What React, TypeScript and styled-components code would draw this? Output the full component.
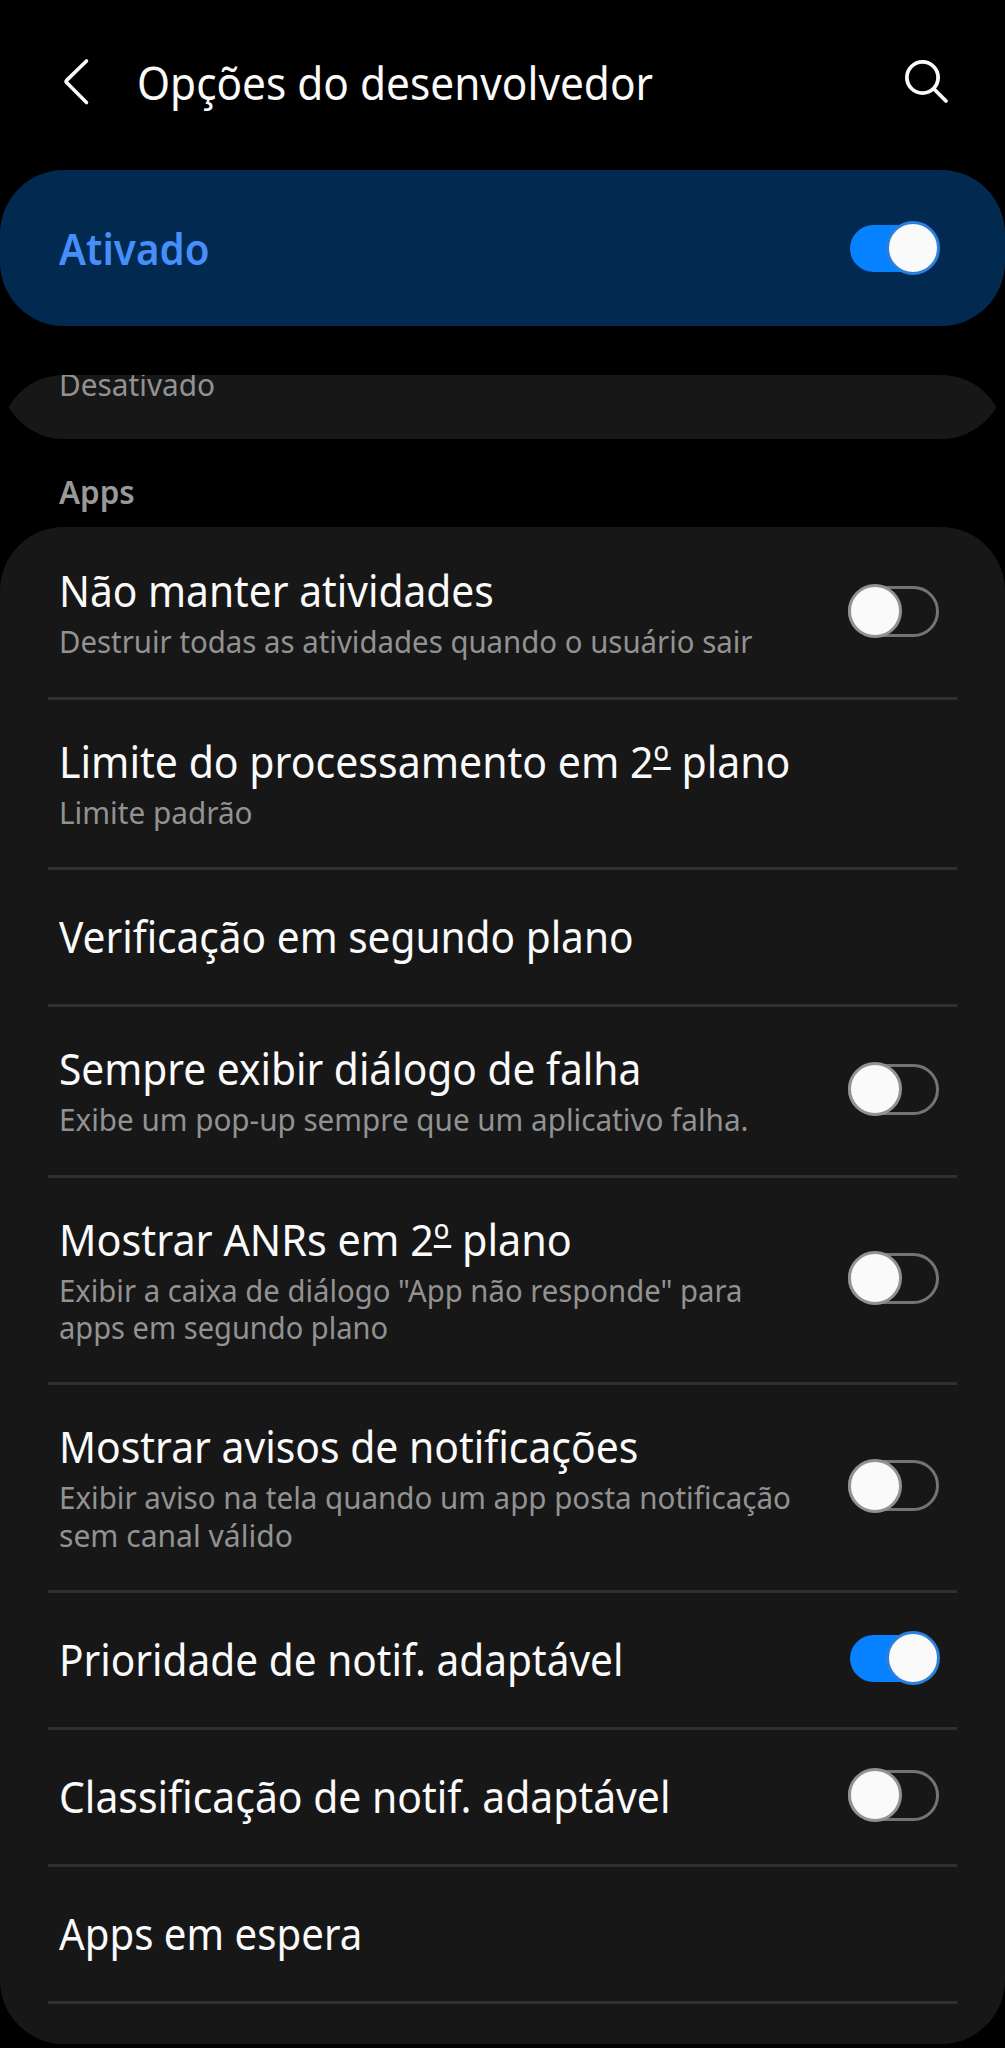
import React from "react";
import styled, { createGlobalStyle } from "styled-components";

const GlobalStyle = createGlobalStyle`
  * { box-sizing: border-box; }
  body { margin: 0; background: #000; }
`;

const Screen = styled.main`
  width: 1005px;
  height: 2048px;
  overflow: hidden;
  display: flex;
  flex-direction: column;
  background: #000;
  color: #fafafa;
  font-family: "Noto Sans", "Open Sans", sans-serif;
`;

const TopBar = styled.header`
  height: 170px;
  flex: none;
  display: flex;
  align-items: center;
  padding: 0 54px 6px 60px;
`;

const IconButton = styled.button`
  padding: 0;
  border: 0;
  background: none;
  color: #fafafa;
  display: flex;
  flex: none;
`;

const Narrow = styled.span<{ $stretch: number }>`
  display: block;
  width: max-content;
  white-space: nowrap;
  transform: scaleX(${(p) => p.$stretch});
  transform-origin: left center;
`;

const Ordinal = styled.span`
  letter-spacing: 2px;
  text-decoration: underline;
  text-decoration-thickness: 3px;
  text-underline-offset: -11px;
  text-decoration-skip-ink: none;
`;

const PageTitle = styled.h1`
  flex: 1;
  margin: 0 0 0 41px;
  font-size: 46px;
  font-weight: 400;
  line-height: 54px;
`;

const MasterCard = styled.section`
  height: 156px;
  flex: none;
  display: flex;
  align-items: center;
  justify-content: space-between;
  padding: 0 66px 0 59px;
  border-radius: 64px;
  background: #022950;
`;

const MasterLabel = styled.div`
  font-size: 43px;
  font-weight: 600;
  line-height: 50px;
  padding-top: 2px;
  color: #468ffb;
`;

const ScrollArea = styled.div`
  height: 1669px;
  margin-top: 49px;
  flex: none;
  overflow: hidden;
  border-radius: 64px;
  background: #000;
`;

const PreviousCard = styled.section`
  height: 164px;
  margin-top: -100px;
  padding: 0 59px 37px;
  display: flex;
  flex-direction: column;
  justify-content: flex-end;
  border-radius: 0 0 64px 64px;
  background: #171717;
`;

const Summary = styled.div`
  font-size: 31.5px;
  line-height: 37.5px;
  color: #929292;
`;

const SectionLabel = styled.h2`
  height: 88px;
  margin: 0;
  padding: 34px 59px 0;
  font-size: 33px;
  font-weight: 600;
  line-height: 38px;
  color: #999;
`;

const Card = styled.section`
  height: 1600px;
  padding-top: 2px;
  border-radius: 64px 64px 0 0;
  background: #171717;
`;

const Row = styled.div<{ $height: number }>`
  height: ${(p) => p.$height}px;
  margin: 0 48px;
  padding: 0 18px 0 11px;
  display: flex;
  align-items: center;
  justify-content: space-between;
  border-bottom: 3px solid #303030;
`;

const RowText = styled.div`
  display: flex;
  flex-direction: column;
  gap: 6px;
`;

const RowTitle = styled.div`
  font-size: 43px;
  line-height: 50px;
`;

const Track = styled.span<{ $on: boolean; $raise: number }>`
  display: flex;
  align-items: center;
  flex: none;
  justify-content: ${(p) => (p.$on ? "flex-end" : "flex-start")};
  width: ${(p) => (p.$on ? 89 : 91)}px;
  height: ${(p) => (p.$on ? 47 : 51)}px;
  margin-bottom: ${(p) => p.$raise}px;
  border-radius: 26px;
  background: ${(p) => (p.$on ? "#0681ff" : "transparent")};
  border: ${(p) => (p.$on ? "0" : "3px solid #747474")};
`;

const Knob = styled.span<{ $on: boolean }>`
  flex: none;
  width: 54px;
  height: 54px;
  margin: 0 ${(p) => (p.$on ? "-1px" : "0")} 0 ${(p) => (p.$on ? "0" : "-3px")};
  border-radius: 50%;
  border: 3px solid ${(p) => (p.$on ? "#2c80dc" : "#929292")};
  background: #fafafa;
`;

function Toggle({ on, raise = 4 }: { on: boolean; raise?: number }) {
  return (
    <Track $on={on} $raise={raise} role="switch" aria-checked={on}>
      <Knob $on={on} />
    </Track>
  );
}

type Line = { text: string; stretch: number };
type Option = { title: Line; summary?: Line[]; toggle?: boolean; height: number };

const OPTIONS: Option[] = [
  {
    title: { text: "Não manter atividades", stretch: 0.947 },
    summary: [{ text: "Destruir todas as atividades quando o usuário sair", stretch: 0.933 }],
    toggle: false,
    height: 171,
  },
  {
    title: { text: "Limite do processamento em 2º plano", stretch: 0.954 },
    summary: [{ text: "Limite padrão", stretch: 0.944 }],
    height: 170,
  },
  { title: { text: "Verificação em segundo plano", stretch: 0.944 }, height: 137 },
  {
    title: { text: "Sempre exibir diálogo de falha", stretch: 0.946 },
    summary: [{ text: "Exibe um pop-up sempre que um aplicativo falha.", stretch: 0.941 }],
    toggle: false,
    height: 171,
  },
  {
    title: { text: "Mostrar ANRs em 2º plano", stretch: 0.961 },
    summary: [
      { text: 'Exibir a caixa de diálogo "App não responde" para', stretch: 0.93 },
      { text: "apps em segundo plano", stretch: 0.923 },
    ],
    toggle: false,
    height: 207,
  },
  {
    title: { text: "Mostrar avisos de notificações", stretch: 0.95 },
    summary: [
      { text: "Exibir aviso na tela quando um app posta notificação", stretch: 0.938 },
      { text: "sem canal válido", stretch: 0.954 },
    ],
    toggle: false,
    height: 208,
  },
  { title: { text: "Prioridade de notif. adaptável", stretch: 0.944 }, toggle: true, height: 137 },
  { title: { text: "Classificação de notif. adaptável", stretch: 0.951 }, toggle: false, height: 137 },
  { title: { text: "Apps em espera", stretch: 0.935 }, height: 137 },
];

function Label({ line }: { line: Line }) {
  const [before, after] = line.text.split("º");
  return (
    <Narrow $stretch={line.stretch}>
      {before}
      {after !== undefined && (
        <>
          <Ordinal>º</Ordinal>
          {after}
        </>
      )}
    </Narrow>
  );
}

export default function App() {
  return (
    <>
      <GlobalStyle />
      <Screen>
        <TopBar>
          <IconButton aria-label="Voltar">
            <svg width="36" height="50" viewBox="0 0 36 50" fill="none" stroke="currentColor" strokeWidth="3.6" strokeLinecap="round" strokeLinejoin="round">
              <path d="M26.5 4L6.6 23.4Q5.6 24.5 6.6 25.6L26.5 45.5" />
            </svg>
          </IconButton>
          <PageTitle>
            <Narrow $stretch={0.921}>Opções do desenvolvedor</Narrow>
          </PageTitle>
          <IconButton aria-label="Pesquisar">
            <svg width="50" height="50" viewBox="0 0 50 50" fill="none" stroke="currentColor" strokeWidth="3.8" strokeLinecap="round">
              <circle cx="21.5" cy="20.5" r="15.6" />
              <path d="M33 32L45 44" />
            </svg>
          </IconButton>
        </TopBar>

        <MasterCard>
          <MasterLabel>
            <Narrow $stretch={0.937}>Ativado</Narrow>
          </MasterLabel>
          <Toggle on raise={0} />
        </MasterCard>

        <ScrollArea>
          <PreviousCard>
            <Summary>
              <Narrow $stretch={0.945}>Desativado</Narrow>
            </Summary>
          </PreviousCard>
          <SectionLabel>
            <Narrow $stretch={0.95}>Apps</Narrow>
          </SectionLabel>
          <Card>
            {OPTIONS.map((o) => (
              <Row key={o.title.text} $height={o.height}>
                <RowText>
                  <RowTitle>
                    <Label line={o.title} />
                  </RowTitle>
                  {o.summary && (
                    <Summary>
                      {o.summary.map((l) => (
                        <Label key={l.text} line={l} />
                      ))}
                    </Summary>
                  )}
                </RowText>
                {o.toggle !== undefined && <Toggle on={o.toggle} />}
              </Row>
            ))}
          </Card>
        </ScrollArea>
      </Screen>
    </>
  );
}
